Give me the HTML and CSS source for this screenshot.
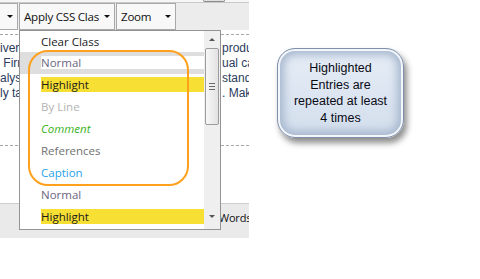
FILE: index.html
```html
<!DOCTYPE html>
<html lang="en">
<head>
  <meta charset="UTF-8">
  <title>Apply CSS Class</title>
  <link rel="stylesheet" href="styles.css">
</head>
<body>

<div class="page">
  <div class="editor">
    <div class="top-strip"><span class="tab-stub"></span></div>

    <!-- Barre d'outils -->
    <div class="toolbar">
      <div class="tb-btn tb-first"><span class="caret"></span></div>
      <div class="tb-btn tb-class">Apply CSS Clas<span class="caret"></span></div>
      <div class="tb-btn tb-zoom">Zoom<span class="caret"></span></div>
    </div>

    <!-- Zone du document -->
    <div class="doc">
      <div class="rule"></div>
      <div class="doc-lines">
        <div class="col-left">
          <div>iver the best services to our</div>
          <div>&nbsp;Firm and the individual</div>
          <div>alysis to meet the highest</div>
          <div>ly take care of the details</div>
        </div>
        <div class="col-right">
          <div>products</div>
          <div>ual cases</div>
          <div>standards</div>
          <div>. Make sure</div>
        </div>
      </div>
      <div class="rule rule-low"></div>
    </div>

    <div class="status"><span class="words">Words</span></div>

    <!-- Menu déroulant des classes -->
    <div class="class-menu">
      <ul class="menu-list">
        <li class="item item-first"><span class="label">Clear Class</span></li>
        <li class="item item-hover"><span class="label c-normal">Normal</span></li>
        <li class="item"><span class="label c-highlight">Highlight</span></li>
        <li class="item"><span class="label c-byline">By Line</span></li>
        <li class="item"><span class="label c-comment">Comment</span></li>
        <li class="item"><span class="label c-references">References</span></li>
        <li class="item"><span class="label c-caption">Caption</span></li>
        <li class="item"><span class="label c-normal">Normal</span></li>
        <li class="item"><span class="label c-highlight">Highlight</span></li>
      </ul>
      <div class="scrollbar">
        <div class="sb-arrow"><span class="tri-up"></span></div>
        <div class="sb-track">
          <div class="sb-thumb"><span class="grip"></span></div>
        </div>
        <div class="sb-arrow sb-arrow-down"><span class="tri-down"></span></div>
      </div>
    </div>

    <!-- Cadre orange autour des entrées répétées -->
    <div class="repeat-ring"></div>
  </div>

  <div class="callout">Highlighted<br>Entries are<br>repeated at least<br>4 times</div>
</div>

</body>
</html>
```

FILE: styles.css
```css
body {
  margin: 0;
  background-color: #ffffff;
  font-family: "Open Sans", "Liberation Sans", sans-serif;
}
.page {
  display: flex;
  align-items: flex-start;
  width: 480px;
  height: 279px;
}
.editor {
  position: relative;
  width: 249px;
  height: 238px;
  background-color: #ececec;
  display: flex;
  flex-direction: column;
  overflow: hidden;
  flex-shrink: 0;
}
.top-strip {
  height: 2px;
  background-color: #f6f6f6;
  border-bottom: 1px solid #c9c9c9;
}
.tab-stub {
  display: block;
  margin-left: 203px;
  width: 20px;
  height: 1px;
  border: 1px solid #8c8c8c;
  border-top: none;
  border-radius: 0 0 4px 4px;
  background-color: #e0e0e0;
}

/* Barre d'outils */
.toolbar {
  height: 27px;
  display: flex;
  gap: 1px;
}
.tb-btn {
  box-sizing: border-box;
  height: 27px;
  border: 1px solid #a9a9a9;
  background-color: #f8f8f8;
  display: flex;
  align-items: center;
  padding-left: 4px;
  font-size: 11.6px;
  letter-spacing: -0.25px;
  color: #111111;
  position: relative;
}
.tb-first {
  width: 18px;
  border-left: none;
}
.tb-class {
  width: 96px;
}
.tb-zoom {
  width: 60px;
}
.caret {
  position: absolute;
  right: 4px;
  top: 11px;
  width: 0;
  height: 0;
  border-left: 3px solid transparent;
  border-right: 3px solid transparent;
  border-top: 3px solid #111111;
}

/* Document */
.doc {
  height: 173px;
  background-color: #ffffff;
  padding-top: 4px;
  box-sizing: border-box;
}
.rule {
  border-top: 1px dashed #a6a6a6;
}
.rule-low {
  margin-top: 44px;
}
.doc-lines {
  display: grid;
  grid-template-columns: 222px 27px;
  margin-top: 6px;
  font-family: "Liberation Sans", Arial, sans-serif;
  font-size: 12px;
  line-height: 15px;
  color: #2c3b5e;
}
.col-left,
.col-right {
  overflow: hidden;
  white-space: nowrap;
}

/* Barre d'état */
.status {
  flex: 1;
  border-top: 1px solid #cfcfcf;
  background-color: #eaeaea;
  padding: 6px 0 0 219px;
  font-size: 11px;
  letter-spacing: -0.2px;
  line-height: 15px;
  color: #111111;
  white-space: nowrap;
}

/* Menu des classes */
.class-menu {
  position: absolute;
  left: 19px;
  top: 30px;
  width: 202px;
  height: 200px;
  box-sizing: border-box;
  border: 1px solid #949494;
  background-color: #ffffff;
  display: flex;
  overflow: hidden;
}
.menu-list {
  list-style: none;
  margin: 0;
  padding: 0;
  flex: 1;
  font-size: 11.5px;
}
.item {
  height: 22px;
  overflow: hidden;
}
.item-first {
  height: 21px;
}
.item .label {
  display: block;
  margin: 3px 0 0 21px;
  height: 15px;
  line-height: 15px;
  color: #1a1a1a;
}
.item-hover {
  background-color: #dedede;
}
.item-hover .label {
  background-color: #ffffff;
  margin-top: 4px;
  height: 13px;
  line-height: 13px;
}
.c-normal {
  color: #6a6680 !important;
}
.c-highlight {
  background-color: #f8df33;
  color: #2e2e2e;
}
.c-byline {
  color: #b3b3b3 !important;
}
.c-comment {
  color: #38b21c !important;
  font-style: italic;
}
.c-references {
  color: #707070 !important;
}
.c-caption {
  color: #1fa3ea !important;
}

/* Barre de défilement */
.scrollbar {
  width: 16px;
  background-color: #efefef;
  display: flex;
  flex-direction: column;
}
.sb-arrow {
  height: 16px;
  display: flex;
  align-items: center;
  justify-content: center;
}
.sb-arrow-down {
  height: 14px;
  align-items: flex-start;
  padding-top: 4px;
}
.tri-up,
.tri-down {
  width: 0;
  height: 0;
  border-left: 3px solid transparent;
  border-right: 3px solid transparent;
}
.tri-up {
  border-bottom: 3px solid #555555;
}
.tri-down {
  border-top: 3px solid #555555;
}
.sb-track {
  flex: 1;
  padding: 1px 1px 0 1px;
}
.sb-thumb {
  box-sizing: border-box;
  height: 77px;
  border: 1px solid #9c9c9c;
  border-radius: 2px;
  background: linear-gradient(to right, #f7f7f7, #e2e2e2);
  display: flex;
  align-items: center;
  justify-content: center;
}
.grip {
  width: 6px;
  height: 5px;
  border-top: 1px solid #6a6a6a;
  border-bottom: 1px solid #6a6a6a;
  background: linear-gradient(#6a6a6a, #6a6a6a) center / 6px 1px no-repeat;
}

/* Cadre orange */
.repeat-ring {
  position: absolute;
  left: 28px;
  top: 50px;
  width: 157px;
  height: 132px;
  border: 2px solid #ffa11c;
  border-radius: 20px;
}

/* Bulle d'explication */
.callout {
  box-sizing: border-box;
  margin: 48px 0 0 28px;
  width: 127px;
  height: 90px;
  padding-top: 11px;
  border: 1px solid #7f90ad;
  border-radius: 18px;
  background: linear-gradient(#e6edf6, #d3deec);
  box-shadow: inset 0 0 0 2px #f3f6fa, inset 0 0 9px 6px #a8b8cf, 3px 5px 6px rgba(0, 0, 0, 0.45);
  font-family: "Liberation Sans", Arial, sans-serif;
  font-size: 12.5px;
  line-height: 16.5px;
  text-align: center;
  color: #0a0a14;
}
```
